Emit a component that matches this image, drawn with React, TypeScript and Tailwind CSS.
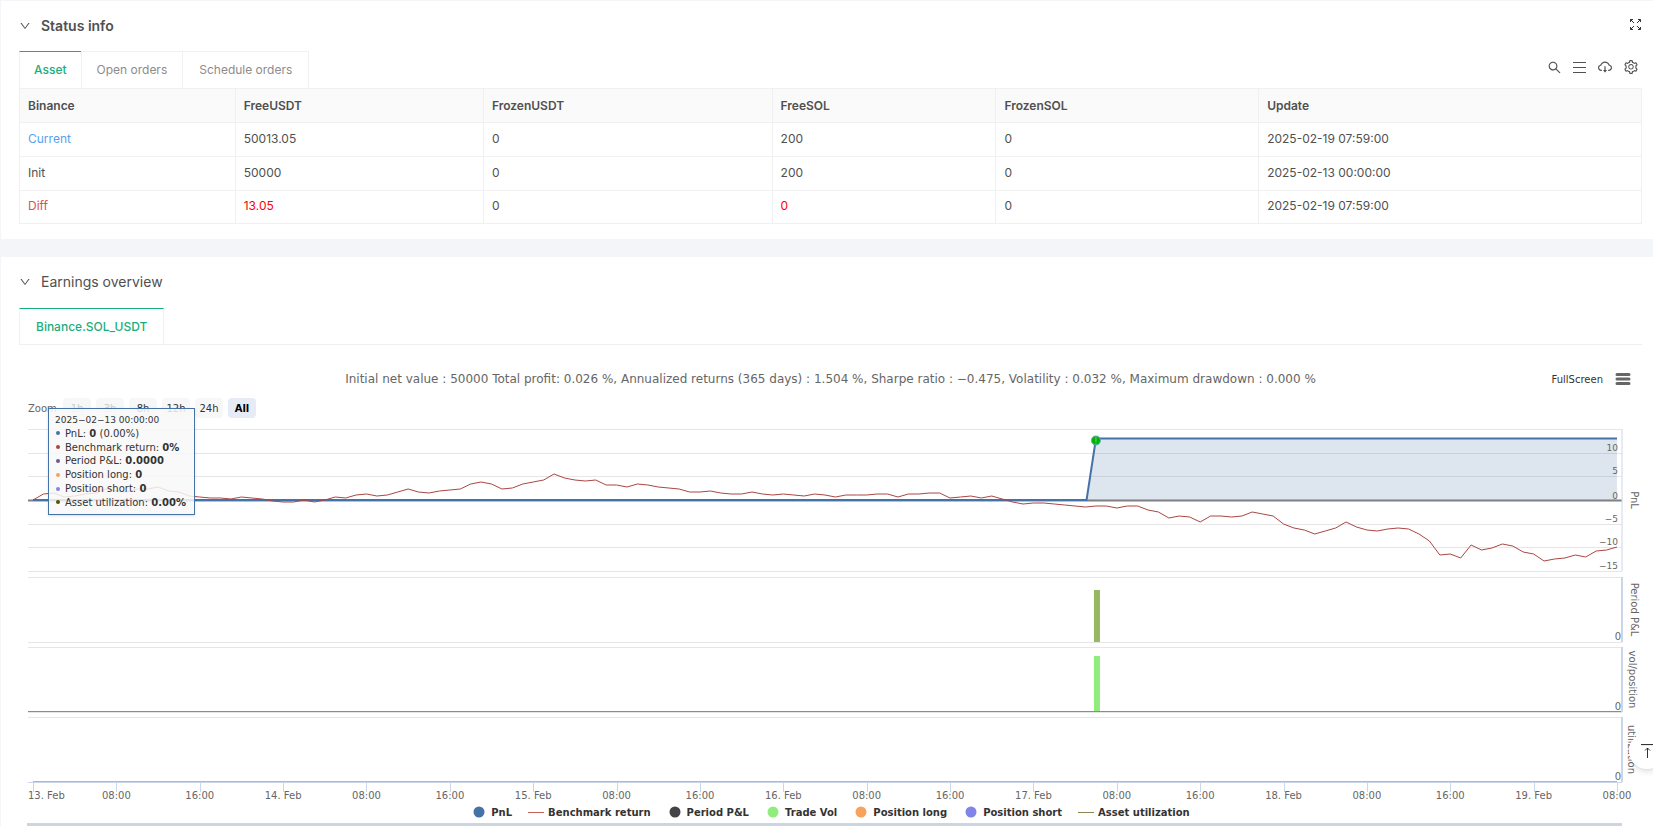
import React, { useLayoutEffect, useRef, useState } from "react";
import { AiOutlineCloudDownload, AiOutlineDown, AiOutlineSearch, AiOutlineSetting } from "react-icons/ai";

type AssetRow = {
  name: string;
  nameClass: string;
  cells: string[];
  changed: boolean[];
};

const columns = [
  { label: "Binance", width: "w-[13.3%]" },
  { label: "FreeUSDT", width: "w-[15.3%]" },
  { label: "FrozenUSDT", width: "w-[17.8%]" },
  { label: "FreeSOL", width: "w-[13.8%]" },
  { label: "FrozenSOL", width: "w-[16.2%]" },
  { label: "Update", width: "w-[23.6%]" },
];

const rows: AssetRow[] = [
  {
    name: "Current",
    nameClass: "text-[#5a9fee]",
    cells: ["50013.05", "0", "200", "0", "2025-02-19 07:59:00"],
    changed: [],
  },
  {
    name: "Init",
    nameClass: "",
    cells: ["50000", "0", "200", "0", "2025-02-13 00:00:00"],
    changed: [],
  },
  {
    name: "Diff",
    nameClass: "text-[#d9534f]",
    cells: ["13.05", "0", "0", "0", "2025-02-19 07:59:00"],
    changed: [true, false, true],
  },
];

// hourly benchmark return, drawn as an offset below the zero line
const benchmark = [
  0, -6, -7, -3, -4, -6, -7, -11, -9, -8, -11, -11, -13, -9, -8, -4, -3, -2, -2, -1, -3, -2, -1, 1, 2, 2, 0, 2, 0, -3,
  -2, -5, -6, -4, -5, -8, -11, -8, -7, -9, -10, -11, -16, -18, -16, -11, -12, -16, -18, -20, -26, -22, -20, -19, -20,
  -15, -15, -13, -16, -15, -13, -12, -11, -8, -8, -9, -7, -6, -6, -8, -6, -5, -6, -5, -4, -6, -5, -3, -5, -5, -5, -6,
  -6, -3, -6, -6, -7, -7, -2, -3, -4, -2, -4, -1, 2, 4, 3, 3, 4, 5, 6, 7, 6, 6, 8, 6, 6, 10, 12, 18, 16, 17, 22, 16, 16,
  17, 16, 12, 14, 16, 24, 28, 30, 34, 31, 28, 22, 27, 30, 31, 29, 28, 29, 34, 41, 55, 54, 58, 45, 50, 48, 44, 46, 52,
  54, 61, 59, 58, 55, 57, 51, 50, 47,
];

const timeLabels = [
  "13. Feb", "08:00", "16:00", "14. Feb", "08:00", "16:00", "15. Feb", "08:00", "16:00", "16. Feb",
  "08:00", "16:00", "17. Feb", "08:00", "16:00", "18. Feb", "08:00", "16:00", "19. Feb", "08:00",
];

const gridLines = [5, 29, 52, 100, 123, 147];

const pnlLabels = [
  { text: "10", y: 27 },
  { text: "5", y: 50 },
  { text: "0", y: 75 },
  { text: "−5", y: 98 },
  { text: "−10", y: 121 },
  { text: "−15", y: 145 },
];

const panes = [
  { title: "PnL", top: 5, bottom: 147, x: 8 },
  { title: "Period P&L", top: 153, bottom: 218, x: 8 },
  { title: "vol/position", top: 223, bottom: 288, x: 6 },
  { title: "utilization", top: 293, bottom: 358, x: 5 },
];

const legend = [
  { label: "PnL", color: "text-[#4572a7]", line: false },
  { label: "Benchmark return", color: "text-[#c4605e]", line: true },
  { label: "Period P&L", color: "text-[#434348]", line: false },
  { label: "Trade Vol", color: "text-[#90ed7d]", line: false },
  { label: "Position long", color: "text-[#f7a35c]", line: false },
  { label: "Position short", color: "text-[#8085e9]", line: false },
  { label: "Asset utilization", color: "text-[#8d8653]", line: true },
];

const tooltipRows = [
  { label: "PnL", value: "0", extra: " (0.00%)", dot: "bg-[#4572a7]" },
  { label: "Benchmark return", value: "0%", extra: "", dot: "bg-[#aa4643]" },
  { label: "Period P&L", value: "0.0000", extra: "", dot: "bg-[#71588f]" },
  { label: "Position long", value: "0", extra: "", dot: "bg-[#f7a35c]" },
  { label: "Position short", value: "0", extra: "", dot: "bg-[#8085e9]" },
  { label: "Asset utilization", value: "0.00%", extra: "", dot: "bg-[#5c4d00]" },
];

const zoomRanges = ["1h", "3h", "8h", "12h", "24h", "All"];

const SectionTitle = ({ title, className }: { title: string; className: string }) => (
  <div className="flex items-center gap-[10px]">
    <button aria-label={`Collapse ${title}`}>
      <AiOutlineDown className="h-3 w-3" />
    </button>
    <h2 className={`text-sm ${className}`}>{title}</h2>
  </div>
);

const AssetTable = () => (
  <table className="w-full table-fixed border-collapse text-left text-xs">
    <thead>
      <tr className="h-[34px] bg-[#fafafa]">
        {columns.map((col) => (
          <th key={col.label} className={`border border-[#f0f0f0] px-2 font-semibold ${col.width}`}>
            {col.label}
          </th>
        ))}
      </tr>
    </thead>
    <tbody>
      {rows.map((row) => (
        <tr key={row.name} className="h-[34px] last:h-[33px]">
          <td className={`border border-[#f0f0f0] px-2 pb-0.5 ${row.nameClass}`}>{row.name}</td>
          {row.cells.map((cell, i) => (
            <td key={i} className={`border border-[#f0f0f0] px-2 pb-0.5 ${row.changed[i] ? "text-[#ff0000]" : ""}`}>
              {cell}
            </td>
          ))}
        </tr>
      ))}
    </tbody>
  </table>
);

const Chart = () => {
  const boxRef = useRef<HTMLDivElement>(null);
  const [width, setWidth] = useState(1200);

  useLayoutEffect(() => {
    const box = boxRef.current;
    if (!box) return;
    const update = () => setWidth(box.clientWidth);
    update();
    const observer = new ResizeObserver(update);
    observer.observe(box);
    return () => observer.disconnect();
  }, []);

  const left = 9;
  const right = width - 20;
  const hours = benchmark.length - 1;
  const xAt = (hour: number) => 14 + ((width - 39) * hour) / hours;
  const zero = 76;
  const profit = 14;
  const entry = xAt(101.1);
  const peak = xAt(102);
  const end = xAt(hours);
  const benchmarkPoints = benchmark.map((v, i) => `${xAt(i)},${zero + v}`).join(" ");

  return (
    <div ref={boxRef} className="w-full">
      <svg width="100%" height="380" className="block" fontFamily="DejaVu Sans, sans-serif">
        {gridLines.map((y) => (
          <path key={y} d={`M${left} ${y + 0.5}H${right}`} stroke="#e6e6e6" />
        ))}
        {panes.slice(1).map((pane) => (
          <path key={pane.title} d={`M${left} ${pane.top + 0.5}H${right}M${left} ${pane.bottom + 0.5}H${right}`} stroke="#e6e6e6" />
        ))}

        <path d={`M${left} ${zero + 0.5}H${right}`} stroke="#808080" strokeWidth="2" />
        <path d={`M${entry} ${zero}L${peak} ${profit}H${end}V${zero}Z`} fill="#4572a7" fillOpacity="0.18" />
        <path d={`M${xAt(0)} ${zero}H${entry}L${peak} ${profit + 0.5}H${end}`} fill="none" stroke="#4572a7" strokeWidth="2" />
        <polyline points={benchmarkPoints} fill="none" stroke="#aa4643" strokeWidth="1" />
        <circle cx={peak} cy={16.5} r="4.5" fill="#00b400" stroke="#5fa8c8" strokeWidth="1" />
        <path d={`M${peak} 13V18M${peak} 19V20`} stroke="#6fd06f" />

        <rect x={peak - 2} y="166" width="6" height="52" fill="#96b861" />
        <rect x={peak - 2} y="232" width="6" height="56" fill="#90ed7d" />
        <path d={`M${left} 287.5H${right}`} stroke="#4ba0c8" />
        <path d={`M${left} 358.5H${right}`} stroke="#ccd6eb" />
        <path d={`M${xAt(0)} 357.5H${end}`} stroke="#bdb9a0" />

        {panes.map((pane) => (
          <path key={pane.title} d={`M${right} ${pane.top}V${pane.bottom}`} stroke="#ccd6eb" strokeWidth={pane.top === 5 ? 1 : 2} />
        ))}

        {pnlLabels.map((label) => (
          <text key={label.text} x={right - 4} y={label.y} textAnchor="end" fontSize="9" fill="#666666">
            {label.text}
          </text>
        ))}
        {panes.slice(1).map((pane) => (
          <text key={pane.title} x={right - 1} y={pane.bottom - 2} textAnchor="end" fontSize="10" fill="#666666">
            0
          </text>
        ))}
        {panes.map((pane) => (
          <text
            key={pane.title}
            transform={`translate(${right + pane.x + 1} ${(pane.top + pane.bottom) / 2}) rotate(90)`}
            textAnchor="middle"
            fontSize="10"
            fill="#666666"
          >
            {pane.title}
          </text>
        ))}

        {timeLabels.map((label, i) => {
          const x = xAt(i * 8);
          return (
            <g key={i}>
              <path d={`M${Math.round(x) + 0.5} 359V368`} stroke="#ccd6eb" />
              <text x={i === 0 ? left : x} y="375" textAnchor={i === 0 ? "start" : "middle"} fontSize="10" fill="#666666">
                {label}
              </text>
            </g>
          );
        })}
      </svg>
    </div>
  );
};

const Tooltip = () => (
  <div className="absolute left-[29px] top-[63px] flex h-[107px] flex-col justify-between whitespace-nowrap border border-[#4572a7] bg-[#f8f8f8]/85 py-[5px] pl-[6px] pr-2 text-[10px] leading-[13px] text-[#333333] shadow">
    <span className="text-[9px] leading-3">2025−02−13 00:00:00</span>
    {tooltipRows.map((row) => (
      <div key={row.label} className="flex items-center gap-[5px]">
        <i className={`ml-px h-1 w-1 rounded-full ${row.dot}`} />
        <span>
          {row.label}: <b>{row.value}</b>
          {row.extra}
        </span>
      </div>
    ))}
  </div>
);

const EarningsChart = () => (
  <div className="relative pt-[22px] font-['DejaVu_Sans',sans-serif]">
    <div className="grid h-6 grid-cols-[1fr_auto_1fr] items-center">
      <span />
      <div className="text-xs text-[#666666]">
        Initial net value : 50000 Total profit: 0.026 %, Annualized returns (365 days) : 1.504 %, Sharpe ratio : −0.475,
        Volatility : 0.032 %, Maximum drawdown : 0.000 %
      </div>
      <div className="flex items-center justify-end gap-3 pr-[11px]">
        <button className="text-[10px] text-[#333333]">FullScreen</button>
        <button aria-label="Chart menu">
          <svg width="16" height="14" viewBox="0 0 16 14" stroke="#666666" strokeWidth="3" strokeLinecap="round">
            <path d="M2 2.5H14M2 7H14M2 11.5H14" />
          </svg>
        </button>
      </div>
    </div>

    <div className="mb-[6px] mt-[7px] flex items-center gap-[5px] pl-[9px] text-[10px] text-[#333333]">
      <span className="w-[30px] text-[#666666]">Zoom</span>
      {zoomRanges.map((range, i) => (
        <button
          key={range}
          disabled={i < 2}
          className={`h-5 w-7 rounded-sm ${
            range === "All" ? "bg-[#e6ebf5] font-bold text-black" : "bg-[#f7f7f7] disabled:text-[#cccccc]"
          }`}
        >
          {range}
        </button>
      ))}
    </div>

    <Chart />

    <div className="flex h-4 items-center justify-center gap-4 text-[10px] font-bold text-[#333333]">
      {legend.map((item) => (
        <button key={item.label} className="flex items-center gap-1">
          <svg width="16" height="12" className={item.color}>
            {item.line ? <path d="M0 6.5H16" stroke="currentColor" /> : <circle cx="8" cy="6" r="5.5" fill="currentColor" />}
          </svg>
          {item.label}
        </button>
      ))}
    </div>
    <div className="ml-2 mr-5 mt-[3px] h-[3px] bg-[#ccd6e2]" />

    <Tooltip />
  </div>
);

const App = () => {
  return (
    <main className="bg-[#f4f5f8] font-['Inter',sans-serif] text-[#505050]">
      <section className="ml-px border-t border-[#f4f5f8] bg-white pb-[15px] pl-[18px] pr-[11px]">
        <div className="flex h-[50px] items-center justify-between">
          <SectionTitle title="Status info" className="font-semibold" />
          <button aria-label="Full screen" className="pb-[3px] pr-px">
            <svg width="11" height="11" fill="none" stroke="#333333">
              <path d="M0.5 3V0.5H3M0.5 0.5L4 4M8 0.5H10.5V3M10.5 0.5L7 4M0.5 8V10.5H3M0.5 10.5L4 7M8 10.5H10.5V8M10.5 10.5L7 7" />
            </svg>
          </button>
        </div>
        <div className="flex items-center justify-between">
          <div role="tablist" className="flex h-[37px] border-r border-[#f0f0f0] text-xs text-[#8c8c8c]">
            <button role="tab" className="border-l border-t border-l-[#f0f0f0] border-t-[#1aad7d] px-[14px] font-medium text-[#1aad7d]">
              Asset
            </button>
            <button role="tab" className="border-l border-t border-[#f0f0f0] px-[15px]">
              Open orders
            </button>
            <button role="tab" className="border-l border-t border-[#f0f0f0] px-4">
              Schedule orders
            </button>
          </div>
          <div className="flex items-center gap-[10px] pb-[5px] pr-[3px]">
            <button aria-label="Search">
              <AiOutlineSearch className="h-[15px] w-[15px]" />
            </button>
            <button aria-label="Columns">
              <svg width="15" height="13" stroke="currentColor">
                <path d="M1 1.5H14M1 6.5H14M1 11.5H14" />
              </svg>
            </button>
            <button aria-label="Download">
              <AiOutlineCloudDownload className="h-4 w-4" />
            </button>
            <button aria-label="Settings">
              <AiOutlineSetting className="h-4 w-4" />
            </button>
          </div>
        </div>
        <AssetTable />
      </section>

      <section className="ml-px mt-[18px] bg-white pl-[18px] pr-[11px]">
        <div className="flex h-[51px] items-center pb-px">
          <SectionTitle title="Earnings overview" className="font-normal" />
        </div>
        <div role="tablist" className="flex h-[37px] border-b border-[#f0f0f0] text-xs">
          <button role="tab" className="border-x border-t border-x-[#f0f0f0] border-t-[#1aad7d] px-4 font-medium text-[#1aad7d]">
            Binance.SOL_USDT
          </button>
        </div>
        <EarningsChart />
      </section>

      <button
        aria-label="Back to top"
        className="fixed -right-3 bottom-[57px] flex h-9 w-9 items-center justify-center rounded-full bg-white shadow-md"
      >
        <svg width="14" height="14" fill="none" stroke="#333333">
          <path d="M1 0.5H13" strokeWidth="1.2" />
          <path d="M7.5 14V4M5 6.5L7.5 4L10 6.5" />
        </svg>
      </button>
    </main>
  );
};

export default App;
